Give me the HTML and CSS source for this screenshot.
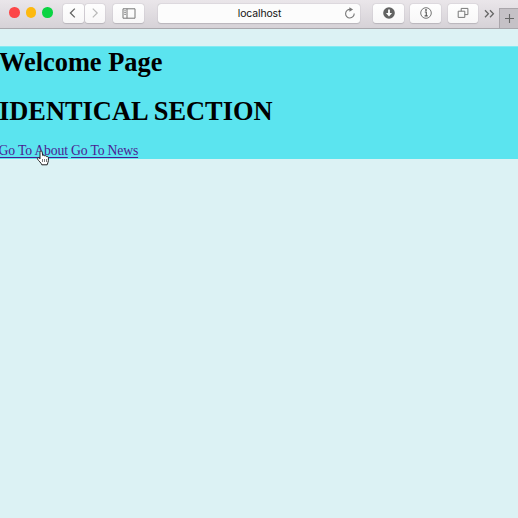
FILE: index.html
```html
<!DOCTYPE html>
<html lang="en">
<head>
<meta charset="utf-8">
<title>localhost</title>
<link rel="stylesheet" href="styles.css">
</head>
<body>
<header class="toolbar">
  <div class="lights"><i class="red"></i><i class="yellow"></i><i class="green"></i></div>
  <div class="nav">
    <span class="btn"><svg width="21" height="18" viewBox="0 0 21 18"><path d="M11.8 4.6 7.4 9l4.4 4.4" stroke="#626262" stroke-width="1.3"/></svg></span>
    <span class="btn"><svg width="20" height="18" viewBox="0 0 20 18"><path d="m7.8 4.6 4.4 4.4-4.4 4.4" stroke="#b8b8b8" stroke-width="1.2"/></svg></span>
  </div>
  <span class="btn side"><svg width="14" height="11" viewBox="0 0 14 11"><path d="M1 .8h12v9.4H1zM5 .8v9.4M2.3 2.8h1.5M2.3 4.6h1.5M2.3 6.4h1.5" stroke="#777"/></svg></span>
  <div class="address"><span>localhost</span>
    <svg class="reload" width="12" height="13" viewBox="0 0 12 13"><path d="M6.3 2.4A4.3 4.3 0 1 0 10.2 6.6" stroke="#777" stroke-width="1.1"/><path d="M5.4.2v4.5l3.7-2.2z" fill="#777"/></svg>
  </div>
  <span class="btn download"><svg width="12" height="12" viewBox="0 0 12 12"><circle cx="6" cy="6" r="5.8" fill="#626262"/><path d="M6 2.5v5" stroke="#fff" stroke-width="1.8"/><path d="M2.9 6h6.2L6 9.4z" fill="#fff"/></svg></span>
  <span class="btn info"><svg width="12" height="12" viewBox="0 0 12 12"><circle cx="6" cy="6" r="5.3" stroke="#666" stroke-width=".9"/><path d="M4.8 5h1.5v3.7M4.6 8.9h3.1" stroke="#555" stroke-width="1.1"/><circle cx="6" cy="3" r=".9" fill="#555"/></svg></span>
  <span class="btn tabs"><svg width="12" height="12" viewBox="0 0 12 12"><path d="M1.2 4.2h6.6v6.2H1.2zM4.2 4.2V1.4h6.7v6.2H7.8" stroke="#777"/></svg></span>
  <svg class="more" width="11" height="10" viewBox="0 0 11 10"><path d="m1 1.3 3.4 3.5L1 8.3m5-7 3.4 3.5L6 8.3" stroke="#666" stroke-width="1.3"/></svg>
  <span class="new-tab"><svg width="11" height="11" viewBox="0 0 11 11"><path d="M5.5 1v9M1 5.5h9" stroke="#666" stroke-width="1.1"/></svg></span>
</header>
<main class="page">
  <section class="welcome">
    <h1>Welcome Page</h1>
    <h1 class="identical">IDENTICAL SECTION</h1>
    <nav class="links"><a href="#about">Go To About</a> <a href="#news">Go To News</a></nav>
  </section>
</main>
<svg class="cursor" width="14" height="16" viewBox="0 0 14 16"><path d="M4 8.8V2.2c0-1.8 2-1.8 2.2 0l.5 3.4c.7-.7 1.8-.4 2 .4.8-.6 1.7-.2 1.9.6 1-.3 1.8.2 1.8 1.2v2.8c0 1.5-1 2.4-1.2 4.2H5.8C5.2 12.7 2.6 11 1.6 9.2c-.7-1.2.8-2 1.7-1.1z" fill="#fff" stroke="#222"/><path d="M6.5 9v3m2-3v3m2-3v3" stroke="#444" stroke-width=".7"/></svg>
</body>
</html>
```
FILE: styles.css
```css
* { box-sizing: border-box; }
body {
  margin: 0;
  height: 518px;
  overflow: hidden;
  background: #dcf2f4;
  font-family: "Liberation Serif", serif;
}
svg { display: block; fill: none; flex: none; }
.toolbar {
  display: flex;
  align-items: flex-start;
  height: 29px;
  padding: 4px 0 0 9px;
  background: linear-gradient(#eae6ea, #d6d2d7);
  border-bottom: 1px solid #a9a8ad;
}
.lights { display: flex; gap: 6px; width: 54px; padding-top: 3.2px; }
.lights i { width: 10.5px; height: 10.5px; border-radius: 50%; }
.red { background: #fc4648; }
.yellow { background: #fdb90f; }
.green { background: #0bd443; }
.btn {
  display: flex;
  align-items: center;
  justify-content: center;
  flex: none;
  height: 18.5px;
  border-radius: 3px;
  background: linear-gradient(#fefefe, #f8f7f8);
  box-shadow: 0 0 1px #aaa7ac, 0 .5px 1px #bbb8bd;
}
.nav { display: flex; gap: 1px; }
.side { width: 31px; margin-left: 8px; }
.address {
  display: flex;
  align-items: center;
  justify-content: center;
  position: relative;
  flex: none;
  width: 202px;
  height: 18.5px;
  margin-left: 14px;
  border-radius: 3px;
  background: #fcfcfc;
  box-shadow: 0 0 1px #aaa7ac, 0 .5px 1px #bbb8bd;
  font: 10.4px/18px Inter, sans-serif;
  letter-spacing: -.1px;
  color: #111;
}
.address span { position: relative; left: .5px; top: .8px; }
.reload { position: absolute; right: 4.5px; top: 3px; }
.download { width: 31px; margin-left: 13px; }
.info { width: 31px; margin-left: 6px; }
.tabs { width: 30px; margin-left: 7px; }
.more { margin: 5px 0 0 6px; }
.new-tab {
  display: flex;
  align-items: center;
  justify-content: center;
  flex: none;
  width: 19px;
  height: 20px;
  margin: 4px 0 0 4px;
  background: #c5c1c6;
  border: 1px solid #aaa6ab;
  border-right: 0;
  border-bottom: 0;
}
.page { padding-top: 17px; }
.welcome { height: 113px; background: #5be4ef; border-top: 1px solid #83eaf2; }
h1 { margin: 0 0 0 -1px; font-size: 26.4px; line-height: 31px; white-space: nowrap; color: #000; }
.identical { margin-top: 18px; }
.links {
  margin: 16px 0 0 -1.4px;
  font-size: 13.7px;
  line-height: 16px;
  letter-spacing: -.17px;
  white-space: nowrap;
}
.links a { color: #4b1c91; text-underline-offset: 2px; }
.cursor { position: absolute; left: 36px; top: 150px; }
```
